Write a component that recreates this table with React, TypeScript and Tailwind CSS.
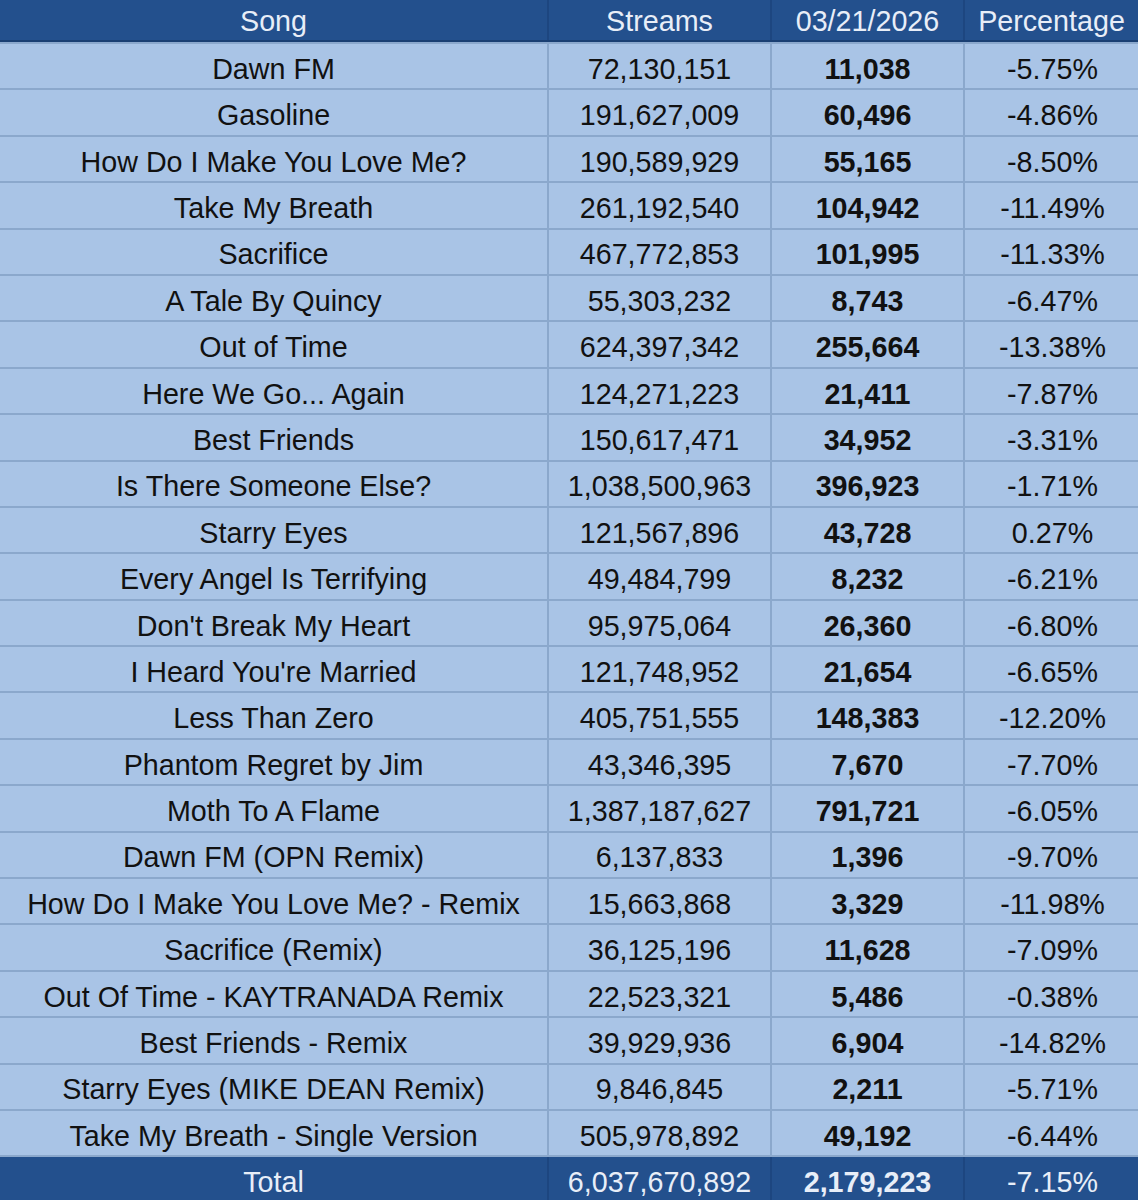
import React from "react";

const rows: [string, string, string, string][] = [
  ["Dawn FM", "72,130,151", "11,038", "-5.75%"],
  ["Gasoline", "191,627,009", "60,496", "-4.86%"],
  ["How Do I Make You Love Me?", "190,589,929", "55,165", "-8.50%"],
  ["Take My Breath", "261,192,540", "104,942", "-11.49%"],
  ["Sacrifice", "467,772,853", "101,995", "-11.33%"],
  ["A Tale By Quincy", "55,303,232", "8,743", "-6.47%"],
  ["Out of Time", "624,397,342", "255,664", "-13.38%"],
  ["Here We Go... Again", "124,271,223", "21,411", "-7.87%"],
  ["Best Friends", "150,617,471", "34,952", "-3.31%"],
  ["Is There Someone Else?", "1,038,500,963", "396,923", "-1.71%"],
  ["Starry Eyes", "121,567,896", "43,728", "0.27%"],
  ["Every Angel Is Terrifying", "49,484,799", "8,232", "-6.21%"],
  ["Don't Break My Heart", "95,975,064", "26,360", "-6.80%"],
  ["I Heard You're Married", "121,748,952", "21,654", "-6.65%"],
  ["Less Than Zero", "405,751,555", "148,383", "-12.20%"],
  ["Phantom Regret by Jim", "43,346,395", "7,670", "-7.70%"],
  ["Moth To A Flame", "1,387,187,627", "791,721", "-6.05%"],
  ["Dawn FM (OPN Remix)", "6,137,833", "1,396", "-9.70%"],
  ["How Do I Make You Love Me? - Remix", "15,663,868", "3,329", "-11.98%"],
  ["Sacrifice (Remix)", "36,125,196", "11,628", "-7.09%"],
  ["Out Of Time - KAYTRANADA Remix", "22,523,321", "5,486", "-0.38%"],
  ["Best Friends - Remix", "39,929,936", "6,904", "-14.82%"],
  ["Starry Eyes (MIKE DEAN Remix)", "9,846,845", "2,211", "-5.71%"],
  ["Take My Breath - Single Version", "505,978,892", "49,192", "-6.44%"],
];

const grid = "grid grid-cols-[547px_223px_193px_175px]";

export default function App() {
  return (
    <div
      className="w-[1138px] h-[1200px] overflow-hidden bg-[#a9c4e6] text-[28.7px] leading-none"
      style={{ fontFamily: '"Liberation Sans", Arial, Helvetica, sans-serif' }}
    >
      <div className={`${grid} h-[42px] bg-[#23508d] text-[#e8eef8] border-b-2 border-[#1a3f72]`}>
        {["Song", "Streams", "03/21/2026", "Percentage"].map((h, i) => (
          <div
            key={h}
            className={`flex items-center justify-center pt-[2px] ${i > 0 ? "border-l-2 border-[#1d4680]" : ""}`}
          >
            {h}
          </div>
        ))}
      </div>
      {rows.map((r) => (
        <div key={r[0]} className={`${grid} h-[46.4px] border-t-2 border-[#8ba8cc] text-[#111111]`}>
          <div className="flex items-center justify-center pt-[6px] whitespace-nowrap">{r[0]}</div>
          <div className="flex items-center justify-center pt-[6px] border-l-2 border-[#8ba8cc]">{r[1]}</div>
          <div className="flex items-center justify-center pt-[6px] border-l-2 border-[#8ba8cc] font-bold">{r[2]}</div>
          <div className="flex items-center justify-center pt-[6px] pl-[2px] border-l-2 border-[#8ba8cc]">{r[3]}</div>
        </div>
      ))}
      <div className={`${grid} h-[48px] bg-[#23508d] text-[#e8eef8] border-t-2 border-[#8ba8cc]`}>
        <div className="flex items-center justify-center pt-[4px]">Total</div>
        <div className="flex items-center justify-center pt-[4px] border-l-2 border-[#1d4680]">6,037,670,892</div>
        <div className="flex items-center justify-center pt-[4px] border-l-2 border-[#1d4680] font-bold">2,179,223</div>
        <div className="flex items-center justify-center pt-[4px] pl-[2px] border-l-2 border-[#1d4680]">-7.15%</div>
      </div>
    </div>
  );
}
